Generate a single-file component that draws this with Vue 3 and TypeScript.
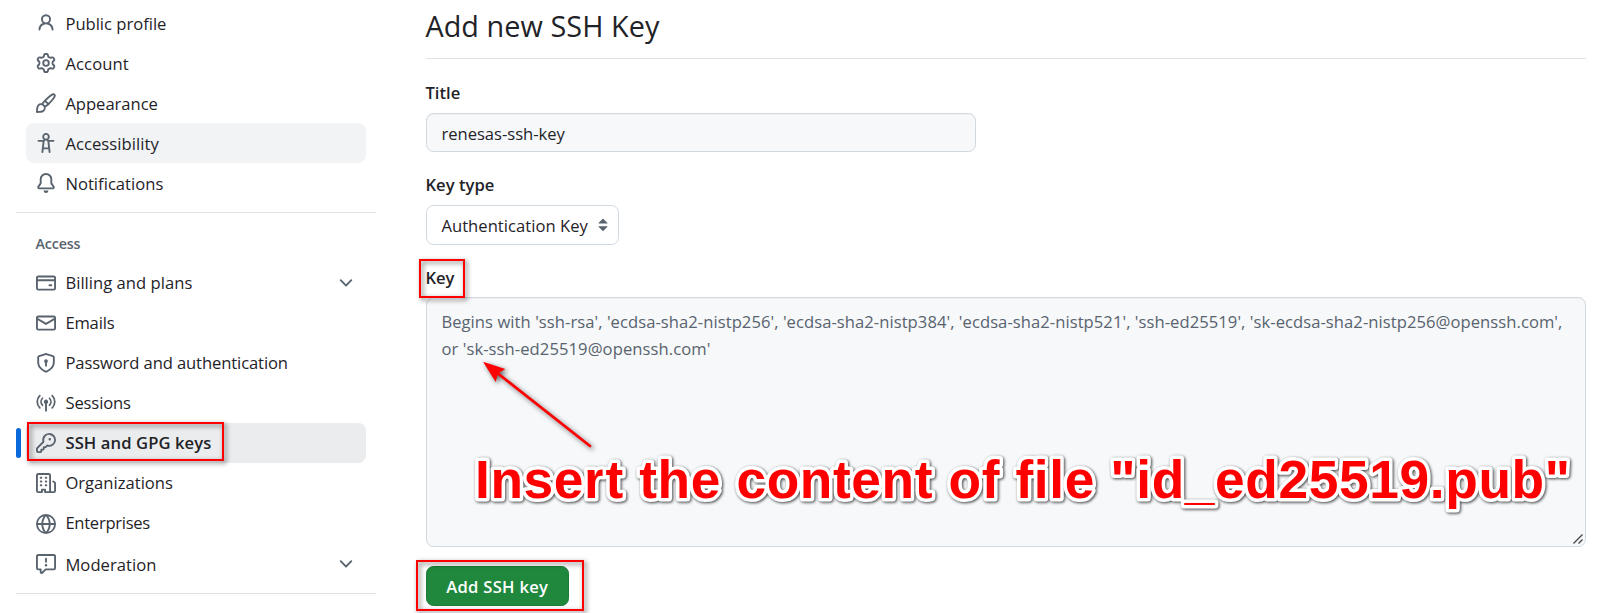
<script setup lang="ts">
import type { Directive } from 'vue'

interface NavItem {
  label: string
  icon: string
  width: number
  state?: 'hover' | 'active'
  expandable?: boolean
  spaced?: boolean
}

// Tracks a label out or in so that it takes up the given width in pixels.
const vFit: Directive<HTMLElement, number> = {
  mounted(el, binding) {
    const natural = el.getBoundingClientRect().width
    const count = (el.textContent ?? '').length
    el.style.letterSpacing = `${(binding.value - natural) / count}px`
  },
}

const icons: Record<string, string> = {
  person:
    'M10.561 8.073a6.005 6.005 0 0 1 3.432 5.142.75.75 0 1 1-1.498.07 4.5 4.5 0 0 0-8.99 0 .75.75 0 0 1-1.498-.07 6.004 6.004 0 0 1 3.431-5.142 3.999 3.999 0 1 1 5.123 0ZM10.5 5a2.5 2.5 0 1 0-5 0 2.5 2.5 0 0 0 5 0Z',
  gear:
    'M8 0a8.2 8.2 0 0 1 .701.031C9.444.095 9.99.645 10.16 1.29l.288 1.107c.018.066.079.158.212.224.231.114.454.243.668.386.123.082.233.09.299.071l1.103-.303c.644-.176 1.392.021 1.82.63.27.385.506.792.704 1.218.315.675.111 1.422-.364 1.891l-.814.806c-.049.048-.098.147-.088.294.016.257.016.515 0 .772-.01.147.038.246.088.294l.814.806c.475.469.679 1.216.364 1.891a7.977 7.977 0 0 1-.704 1.217c-.428.61-1.176.807-1.82.63l-1.102-.302c-.067-.019-.177-.011-.3.071a5.909 5.909 0 0 1-.668.386c-.133.066-.194.158-.211.224l-.29 1.106c-.168.646-.715 1.196-1.458 1.26a8.006 8.006 0 0 1-1.402 0c-.743-.064-1.289-.614-1.458-1.26l-.289-1.106c-.018-.066-.079-.158-.212-.224a5.738 5.738 0 0 1-.668-.386c-.123-.082-.233-.09-.299-.071l-1.103.303c-.644.176-1.392-.021-1.82-.63a8.12 8.12 0 0 1-.704-1.218c-.315-.675-.111-1.422.363-1.891l.815-.806c.05-.048.098-.147.088-.294a6.214 6.214 0 0 1 0-.772c.01-.147-.038-.246-.088-.294l-.815-.806C.635 6.045.431 5.298.746 4.623a7.92 7.92 0 0 1 .704-1.217c.428-.61 1.176-.807 1.82-.63l1.102.302c.067.019.177.011.3-.071.214-.143.437-.272.668-.386.133-.066.194-.158.211-.224l.29-1.106C6.009.645 6.556.095 7.299.03 7.53.01 7.764 0 8 0Zm-.571 1.525c-.036.003-.108.036-.137.146l-.289 1.105c-.147.561-.549.967-.998 1.189-.173.086-.34.183-.5.29-.417.278-.97.423-1.529.27l-1.103-.303c-.109-.03-.175.016-.195.045-.22.312-.412.644-.573.99-.014.031-.021.11.059.19l.815.806c.411.406.562.957.53 1.456a4.709 4.709 0 0 0 0 .582c.032.499-.119 1.05-.53 1.456l-.815.806c-.081.08-.073.159-.059.19.162.346.353.677.573.989.02.03.085.076.195.046l1.102-.303c.56-.153 1.113-.008 1.53.27.161.107.328.204.501.29.447.222.85.629.997 1.189l.289 1.105c.029.109.101.143.137.146a6.6 6.6 0 0 0 1.142 0c.036-.003.108-.036.137-.146l.289-1.105c.147-.561.549-.967.998-1.189.173-.086.34-.183.5-.29.417-.278.97-.423 1.529-.27l1.103.303c.109.029.175-.016.195-.045.22-.313.411-.644.573-.99.014-.031.021-.11-.059-.19l-.815-.806c-.411-.406-.562-.957-.53-1.456a4.709 4.709 0 0 0 0-.582c-.032-.499.119-1.05.53-1.456l.815-.806c.081-.08.073-.159.059-.19a6.464 6.464 0 0 0-.573-.989c-.02-.03-.085-.076-.195-.046l-1.102.303c-.56.153-1.113.008-1.53-.27a4.44 4.44 0 0 0-.501-.29c-.447-.222-.85-.629-.997-1.189l-.289-1.105c-.029-.11-.101-.143-.137-.146a6.6 6.6 0 0 0-1.142 0ZM11 8a3 3 0 1 1-6 0 3 3 0 0 1 6 0ZM9.5 8a1.5 1.5 0 1 0-3.001.001A1.5 1.5 0 0 0 9.5 8Z',
  brush:
    'M11.134 1.535c.7-.509 1.416-.942 2.076-1.155.649-.21 1.463-.267 2.069.34.603.601.568 1.411.368 2.07-.202.668-.624 1.39-1.125 2.096-1.011 1.424-2.496 2.987-3.775 4.249-1.098 1.084-2.132 1.839-3.04 2.3a3.744 3.744 0 0 1-1.055 3.217c-.431.431-1.065.691-1.657.861-.614.177-1.294.287-1.914.357A21.151 21.151 0 0 1 .797 16H.743l.007-.75H.749L.742 16a.75.75 0 0 1-.743-.742l.743-.008-.742.007v-.054a21.25 21.25 0 0 1 .13-2.284c.067-.647.187-1.287.358-1.914.17-.591.43-1.226.86-1.657a3.746 3.746 0 0 1 3.227-1.054c.466-.893 1.225-1.907 2.314-2.982 1.271-1.255 2.833-2.75 4.245-3.777ZM1.62 13.089c-.051.464-.086.929-.104 1.395.466-.018.932-.053 1.396-.104a10.511 10.511 0 0 0 1.668-.309c.526-.151.856-.325 1.011-.48a2.25 2.25 0 1 0-3.182-3.182c-.155.155-.329.485-.48 1.01a10.515 10.515 0 0 0-.309 1.67Zm10.396-10.34c-1.224.89-2.605 2.189-3.822 3.384l1.718 1.718c1.21-1.205 2.51-2.597 3.387-3.833.47-.662.78-1.227.912-1.662.134-.444.032-.551.009-.575h-.001V1.78c-.014-.014-.113-.113-.548.027-.432.14-.995.462-1.655.942Zm-4.832 7.266-.001.001a9.859 9.859 0 0 0 1.63-1.142L7.155 7.216a9.7 9.7 0 0 0-1.161 1.607c.482.302.889.71 1.19 1.192Z',
  accessibility:
    'M9.923 5.302c.063.063.122.129.178.198H14A.75.75 0 0 1 14 7h-3.3l.578 5.163.362 2.997a.75.75 0 0 1-1.49.18L9.868 13H6.132l-.282 2.34a.75.75 0 0 1-1.49-.18l.362-2.997L5.3 7H2a.75.75 0 0 1 0-1.5h3.9a2.54 2.54 0 0 1 .176-.198 3 3 0 1 1 3.847 0ZM9.2 7.073h-.001a1.206 1.206 0 0 0-2.398 0L6.305 11.5h3.39ZM9.5 3a1.5 1.5 0 1 0-3.001.001A1.5 1.5 0 0 0 9.5 3Z',
  bell:
    'M8 16a2 2 0 0 0 1.985-1.75c.017-.137-.097-.25-.235-.25h-3.5c-.138 0-.252.113-.235.25A2 2 0 0 0 8 16ZM3 5a5 5 0 0 1 10 0v2.947c0 .05.015.098.042.139l1.703 2.555A1.519 1.519 0 0 1 13.482 13H2.518a1.516 1.516 0 0 1-1.263-2.36l1.703-2.554A.255.255 0 0 0 3 7.947Zm5-3.5A3.5 3.5 0 0 0 4.5 5v2.947c0 .346-.102.683-.294.97l-1.703 2.556a.017.017 0 0 0-.003.01l.001.006c0 .002.002.004.004.006l.006.004.007.001h10.964l.007-.001.006-.004.004-.006.001-.007a.017.017 0 0 0-.003-.01l-1.703-2.554a1.745 1.745 0 0 1-.294-.97V5A3.5 3.5 0 0 0 8 1.5Z',
  card:
    'M10.75 9a.75.75 0 0 0 0 1.5h1.5a.75.75 0 0 0 0-1.5h-1.5ZM0 3.75C0 2.784.784 2 1.75 2h12.5c.966 0 1.75.784 1.75 1.75v8.5A1.75 1.75 0 0 1 14.25 14H1.75A1.75 1.75 0 0 1 0 12.25ZM14.5 6.5h-13v5.75c0 .138.112.25.25.25h12.5a.25.25 0 0 0 .25-.25Zm0-2.75a.25.25 0 0 0-.25-.25H1.75a.25.25 0 0 0-.25.25V5h13Z',
  mail:
    'M1.75 2h12.5c.966 0 1.75.784 1.75 1.75v8.5A1.75 1.75 0 0 1 14.25 14H1.75A1.75 1.75 0 0 1 0 12.25v-8.5C0 2.784.784 2 1.75 2ZM1.5 12.251c0 .138.112.25.25.25h12.5a.25.25 0 0 0 .25-.25V5.809L8.38 9.397a.75.75 0 0 1-.76 0L1.5 5.809v6.442Zm13-8.181v-.32a.25.25 0 0 0-.25-.25H1.75a.25.25 0 0 0-.25.25v.32L8 7.88Z',
  shield:
    'm8.533.133 5.25 1.68A1.75 1.75 0 0 1 15 3.48V7c0 1.566-.32 3.182-1.303 4.682-.983 1.498-2.585 2.813-5.032 3.855a1.697 1.697 0 0 1-1.33 0c-2.447-1.042-4.049-2.357-5.032-3.855C1.32 10.182 1 8.566 1 7V3.48a1.75 1.75 0 0 1 1.217-1.667l5.25-1.68a1.748 1.748 0 0 1 1.066 0Zm-.61 1.429.001.001-5.25 1.68a.251.251 0 0 0-.174.237V7c0 1.36.275 2.666 1.057 3.859.784 1.194 2.121 2.342 4.366 3.298a.196.196 0 0 0 .154 0c2.245-.957 3.582-2.103 4.366-3.297C13.225 9.666 13.5 8.358 13.5 7V3.48a.25.25 0 0 0-.174-.238l-5.25-1.68a.25.25 0 0 0-.153 0ZM9.5 6.5c0 .536-.286 1.032-.75 1.3v2.45a.75.75 0 0 1-1.5 0V7.8A1.5 1.5 0 1 1 9.5 6.5Z',
  key:
    'M10.5 0a5.499 5.499 0 1 1-1.288 10.848l-.932.932a.749.749 0 0 1-.53.22H7v.75a.749.749 0 0 1-.22.53l-.5.5a.749.749 0 0 1-.53.22H5v.75a.749.749 0 0 1-.22.53l-.5.5a.749.749 0 0 1-.53.22h-2A1.75 1.75 0 0 1 0 14.25v-2c0-.199.079-.389.22-.53l4.932-4.932A5.5 5.5 0 0 1 10.5 0Zm-4 5.5c-.001.431.069.86.205 1.269a.75.75 0 0 1-.181.768L1.5 12.56v1.69c0 .138.112.25.25.25h1.69l.06-.06v-1.19a.75.75 0 0 1 .75-.75h1.19l.06-.06v-1.19a.75.75 0 0 1 .75-.75h1.19l1.023-1.025a.75.75 0 0 1 .768-.18A4 4 0 1 0 6.5 5.5ZM11 6a1 1 0 1 1 0-2 1 1 0 0 1 0 2Z',
  organization:
    'M1.75 16A1.75 1.75 0 0 1 0 14.25V1.75C0 .784.784 0 1.75 0h8.5C11.216 0 12 .784 12 1.75v12.5c0 .085-.006.168-.018.25h2.268a.25.25 0 0 0 .25-.25V8.285a.25.25 0 0 0-.111-.208l-1.055-.703a.749.749 0 1 1 .832-1.248l1.055.703c.487.325.779.871.779 1.456v5.965A1.75 1.75 0 0 1 14.25 16h-3.5a.766.766 0 0 1-.197-.026c-.099.017-.2.026-.303.026h-3a.75.75 0 0 1-.75-.75V14h-1v1.25a.75.75 0 0 1-.75.75Zm-.25-1.75c0 .138.112.25.25.25H4v-1.25a.75.75 0 0 1 .75-.75h2.5a.75.75 0 0 1 .75.75v1.25h2.25a.25.25 0 0 0 .25-.25V1.75a.25.25 0 0 0-.25-.25h-8.5a.25.25 0 0 0-.25.25ZM3.75 6h.5a.75.75 0 0 1 0 1.5h-.5a.75.75 0 0 1 0-1.5ZM3 3.75A.75.75 0 0 1 3.75 3h.5a.75.75 0 0 1 0 1.5h-.5A.75.75 0 0 1 3 3.75Zm4 3A.75.75 0 0 1 7.75 6h.5a.75.75 0 0 1 0 1.5h-.5A.75.75 0 0 1 7 6.75ZM7.75 3h.5a.75.75 0 0 1 0 1.5h-.5a.75.75 0 0 1 0-1.5ZM3 9.75A.75.75 0 0 1 3.75 9h.5a.75.75 0 0 1 0 1.5h-.5A.75.75 0 0 1 3 9.75ZM7.75 9h.5a.75.75 0 0 1 0 1.5h-.5a.75.75 0 0 1 0-1.5Z',
  globe:
    'M8 0a8 8 0 1 1 0 16A8 8 0 0 1 8 0ZM5.78 8.75a9.64 9.64 0 0 0 1.363 4.177c.255.426.542.832.857 1.215.245-.296.551-.705.857-1.215A9.64 9.64 0 0 0 10.22 8.75Zm4.44-1.5a9.64 9.64 0 0 0-1.363-4.177c-.307-.51-.612-.919-.857-1.215a9.927 9.927 0 0 0-.857 1.215A9.64 9.64 0 0 0 5.78 7.25Zm-5.944 1.5H1.543a6.507 6.507 0 0 0 4.666 5.5c-.123-.181-.24-.365-.352-.552-.715-1.192-1.437-2.874-1.581-4.948Zm-2.733-1.5h2.733c.144-2.074.866-3.756 1.58-4.948.12-.197.237-.381.353-.552a6.507 6.507 0 0 0-4.666 5.5Zm10.181 1.5c-.144 2.074-.866 3.756-1.58 4.948-.12.197-.237.381-.353.552a6.507 6.507 0 0 0 4.666-5.5Zm2.733-1.5a6.507 6.507 0 0 0-4.666-5.5c.123.181.24.365.353.552.714 1.192 1.436 2.874 1.58 4.948Z',
  report:
    'M0 1.75C0 .784.784 0 1.75 0h12.5C15.216 0 16 .784 16 1.75v9.5A1.75 1.75 0 0 1 14.25 13H8.06l-2.573 2.573A1.458 1.458 0 0 1 3 14.543V13H1.75A1.75 1.75 0 0 1 0 11.25Zm1.75-.25a.25.25 0 0 0-.25.25v9.5c0 .138.112.25.25.25h2a.75.75 0 0 1 .75.75v2.19l2.72-2.72a.749.749 0 0 1 .53-.22h6.5a.25.25 0 0 0 .25-.25v-9.5a.25.25 0 0 0-.25-.25Zm7 2.25v2.5a.75.75 0 0 1-1.5 0v-2.5a.75.75 0 0 1 1.5 0ZM9 9a1 1 0 1 1-2 0 1 1 0 0 1 2 0Z',
  broadcast: 'M8.75 8.582v5.668a.75.75 0 0 1-1.5 0V8.582a1.75 1.75 0 1 1 1.5 0Z',
}

const broadcastWaves =
  'M3.05 2.05a7 7 0 0 0 0 9.9M12.95 2.05a7 7 0 0 1 0 9.9M5.2 4.2a4 4 0 0 0 0 5.6M10.8 4.2a4 4 0 0 1 0 5.6'

const general: NavItem[] = [
  { label: 'Public profile', icon: 'person', width: 101 },
  { label: 'Account', icon: 'gear', width: 63.5 },
  { label: 'Appearance', icon: 'brush', width: 92.5 },
  { label: 'Accessibility', icon: 'accessibility', width: 93.5, state: 'hover' },
  { label: 'Notifications', icon: 'bell', width: 98 },
]

const access: NavItem[] = [
  { label: 'Billing and plans', icon: 'card', width: 127, expandable: true },
  { label: 'Emails', icon: 'mail', width: 49 },
  { label: 'Password and authentication', icon: 'shield', width: 222.5 },
  { label: 'Sessions', icon: 'broadcast', width: 65.5 },
  { label: 'SSH and GPG keys', icon: 'key', width: 146, state: 'active' },
  { label: 'Organizations', icon: 'organization', width: 107.5 },
  { label: 'Enterprises', icon: 'globe', width: 84.5 },
  { label: 'Moderation', icon: 'report', width: 91, expandable: true, spaced: true },
]

const groups = [
  { name: 'general', title: '', items: general },
  { name: 'access', title: 'Access', items: access },
]
</script>

<template>
  <div class="page">
    <nav class="sidebar">
      <section v-for="group in groups" :key="group.name" class="group" :class="group.name">
        <h2 v-if="group.title" class="group-title"><span v-fit="45">{{ group.title }}</span></h2>
        <a
          v-for="item in group.items"
          :key="item.label"
          class="item"
          :class="[item.state, { spaced: item.spaced }]"
        >
          <svg class="icon" :class="item.icon" viewBox="0 0 16 16">
            <path :d="icons[item.icon]" />
            <path v-if="item.icon === 'broadcast'" class="waves" :d="broadcastWaves" />
          </svg>
          <span v-fit="item.width" class="label">{{ item.label }}</span>
          <svg v-if="item.expandable" class="icon chevron" viewBox="0 0 16 16">
            <path
              d="M12.78 5.22a.749.749 0 0 1 0 1.06l-4.25 4.25a.749.749 0 0 1-1.06 0L3.22 6.28a.749.749 0 1 1 1.06-1.06L8 8.939l3.72-3.719a.749.749 0 0 1 1.06 0Z"
            />
          </svg>
        </a>
      </section>
    </nav>

    <main class="main">
      <h1 class="heading"><span v-fit="234">Add new SSH Key</span></h1>

      <div class="field-label title-label"><span v-fit="35">Title</span></div>
      <div class="control text-input"><span v-fit="123.5">renesas-ssh-key</span></div>

      <div class="field-label type-label"><span v-fit="69">Key type</span></div>
      <div class="control select">
        <span v-fit="146.5">Authentication Key</span>
        <svg class="carets" viewBox="0 0 16 16">
          <path
            d="m4.427 9.427 3.396 3.396a.251.251 0 0 0 .354 0l3.396-3.396A.25.25 0 0 0 11.396 9H4.604a.25.25 0 0 0-.177.427ZM4.423 6.47 7.82 3.072a.25.25 0 0 1 .354 0L11.57 6.47a.25.25 0 0 1-.177.427H4.6a.25.25 0 0 1-.177-.427Z"
          />
        </svg>
      </div>

      <div class="field-label key-label"><span v-fit="29">Key</span></div>
      <div class="control textarea">
        <span v-fit="1121">Begins with 'ssh-rsa', 'ecdsa-sha2-nistp256', 'ecdsa-sha2-nistp384', 'ecdsa-sha2-nistp521', 'ssh-ed25519', 'sk-ecdsa-sha2-nistp256@openssh.com',</span>
        <span v-fit="269">or 'sk-ssh-ed25519@openssh.com'</span>
        <svg class="grip" viewBox="0 0 10 10">
          <path d="M.5 9.5l9-9M5.5 9.5l4-4" />
        </svg>
      </div>

      <button class="submit"><span v-fit="102">Add SSH key</span></button>
    </main>

    <div class="mark mark-nav"></div>
    <div class="mark mark-key"></div>
    <div class="mark mark-submit"></div>

    <svg class="notes" viewBox="0 0 1604 613">
      <g class="arrow">
        <path class="shaft" d="M590 446L496 372" />
        <path class="head" d="M483 361.7L505.3 369L498 373.5L495.7 382Z" />
      </g>
      <text class="callout" x="475" y="498" textLength="1095">Insert the content of file "id_ed25519.pub"</text>
    </svg>
  </div>
</template>

<style>
body {
  margin: 0;
  background: #fff;
}
</style>

<style scoped>
.page {
  position: relative;
  display: flex;
  gap: 50px;
  width: 1604px;
  height: 613px;
  box-sizing: border-box;
  padding: 3px 18px 0 16px;
  overflow: hidden;
  color: #1f2328;
  font: 16.6px/26px "Open Sans", "Noto Sans", sans-serif;
}
.page span {
  display: inline-block;
  white-space: nowrap;
  margin-left: -0.6px;
}
.sidebar {
  width: 360px;
  flex: none;
}
.group {
  padding-bottom: 9px;
  border-bottom: 1px solid #dfe3e7;
}
.group-title {
  margin: 0;
  padding: 18px 0 6px 20px;
  height: 26px;
  color: #59636e;
  font-size: 14.3px;
  font-weight: 600;
  line-height: 26px;
}
.item {
  position: relative;
  display: flex;
  align-items: center;
  gap: 10px;
  height: 40px;
  box-sizing: border-box;
  margin: 0 10px;
  padding: 0 10px;
  border-radius: 7.5px;
}
.item.hover {
  background: #f1f3f5;
}
.item.active {
  background: #ebecee;
  font-weight: 600;
}
.item.active::before {
  content: "";
  position: absolute;
  left: -10px;
  top: 5px;
  width: 5px;
  height: 30px;
  border-radius: 3px;
  background: #0969da;
}
.item.spaced {
  margin-top: 1px;
}
.general .label,
.spaced .label {
  margin-top: 2px;
}
.icon {
  width: 20px;
  height: 20px;
  flex: none;
  fill: #59636e;
}
.icon.globe {
  margin-top: 2px;
}
.chevron {
  margin-left: auto;
}
.waves {
  fill: none;
  stroke: #59636e;
  stroke-width: 1.4;
  stroke-linecap: round;
}
.main {
  flex: 1;
  display: flex;
  flex-direction: column;
  align-items: flex-start;
}
.heading {
  align-self: stretch;
  height: 55px;
  margin: 0;
  border-bottom: 1px solid #dfe3e7;
  font-size: 28.8px;
  font-weight: 400;
  line-height: 46px;
}
.field-label {
  font-weight: 600;
  height: 26px;
}
.title-label {
  margin: 21px 0 7px;
}
.type-label {
  margin: 20px 0 7px;
}
.key-label {
  margin: 20px 0 6px;
}
.control {
  box-sizing: border-box;
  border: 1px solid #d1d9e0;
  border-radius: 7.5px;
  padding: 0 15px;
}
.text-input {
  width: 550px;
  height: 39px;
  padding-top: 7px;
  background: #f6f8fa;
  box-shadow: inset 0 1px 0 #1f23280a;
}
.select {
  display: flex;
  align-items: center;
  justify-content: space-between;
  width: 193px;
  height: 40px;
  padding-right: 5px;
}
.select span {
  margin-top: 2px;
}
.carets {
  width: 20px;
  height: 20px;
  fill: #59636e;
}
.textarea {
  position: relative;
  align-self: stretch;
  height: 250px;
  padding-top: 10px;
  background: #f6f8fa;
  color: #59636e;
  box-shadow: inset 0 1px 0 #1f23280a;
  line-height: 27px;
}
.grip {
  position: absolute;
  right: 2px;
  bottom: 2px;
  width: 10px;
  height: 10px;
  fill: none;
  stroke: #4a4a4a;
  stroke-width: 1.4;
}
.submit {
  width: 143px;
  height: 40px;
  margin-top: 19px;
  padding: 1px 0 0;
  border: 1px solid #1c7b37;
  border-radius: 7.5px;
  background: #1f883d;
  color: #fff;
  font: 600 16.6px/26px "Open Sans", "Noto Sans", sans-serif;
}
.mark {
  position: absolute;
  box-sizing: border-box;
  border: 2px solid #f00;
  filter: drop-shadow(2px 2px 2.5px rgba(0, 0, 0, 0.6));
}
.mark-nav {
  left: 27px;
  top: 422px;
  width: 197px;
  height: 39px;
}
.mark-key {
  left: 419px;
  top: 259px;
  width: 46px;
  height: 39px;
}
.mark-submit {
  left: 416px;
  top: 560px;
  width: 168px;
  height: 51px;
}
.notes {
  position: absolute;
  inset: 0;
  width: 1604px;
  height: 613px;
}
.arrow {
  filter: drop-shadow(2px 2px 2.5px rgba(0, 0, 0, 0.6));
}
.shaft {
  stroke: #f00;
  stroke-width: 2.8;
  stroke-linecap: round;
}
.head {
  fill: #f00;
}
.callout {
  font: bold 53.3px "Liberation Sans", Arial, sans-serif;
  fill: #f00;
  stroke: #fff;
  stroke-width: 7px;
  stroke-linejoin: round;
  paint-order: stroke;
  filter: drop-shadow(1.5px 1.5px 1.5px rgba(0, 0, 0, 0.75));
}
</style>
